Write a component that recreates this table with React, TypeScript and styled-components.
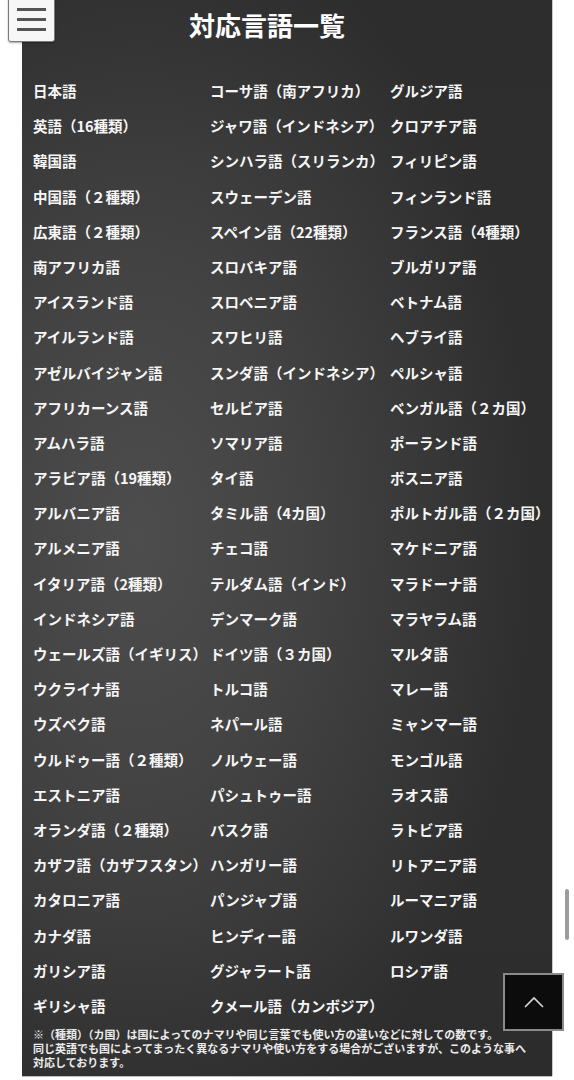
import React from "react";
import styled, { createGlobalStyle } from "styled-components";

const GlobalStyle = createGlobalStyle`
  html, body { margin: 0; padding: 0; background: #ffffff; }
  body {
    font-family: "Noto Sans CJK JP", "Noto Sans", sans-serif;
    overflow: hidden;
  }
`;

const Page = styled.div`
  position: relative;
  width: 574px;
  height: 1080px;
  overflow: hidden;
  background: #ffffff;
`;

const Panel = styled.section`
  box-sizing: border-box;
  width: 530px;
  height: 1076px;
  margin: 0 0 0 22px;
  padding: 0 0 0 11px;
  color: #f4f4f4;
  background:
    linear-gradient(180deg, rgba(40, 40, 40, 0.18) 0%, rgba(40, 40, 40, 0) 15%, rgba(40, 40, 40, 0) 85%, rgba(30, 30, 30, 0.12) 100%),
    radial-gradient(ellipse 75% 60% at 22% 50%, #4e4d4d 0%, #444343 40%, #373737 75%, #2e2e2e 100%);
  box-shadow: 1px 0 0 #c9c9c9, 0 1px 0 #bdbdbd;
`;

const Title = styled.h1`
  margin: 0;
  padding-right: 51px;
  font-size: 26px;
  font-weight: 700;
  line-height: 50px;
  text-align: center;
  color: #ffffff;
`;

const LangGrid = styled.ul`
  list-style: none;
  margin: 23px 0 0;
  padding: 0;
  display: grid;
  grid-template-columns: 177px 180px 1fr;
  grid-template-rows: repeat(27, 35.2px);
  grid-auto-flow: column;
`;

const LangItem = styled.li`
  font-size: 14.5px;
  font-weight: 700;
  line-height: 35.2px;
  white-space: nowrap;
  color: #f6f6f6;
`;

const Note = styled.p`
  margin: 4px 0 0;
  font-size: 11px;
  font-weight: 700;
  line-height: 14px;
  color: #ececec;
  white-space: nowrap;
`;

const NoteLine = styled.span`
  display: block;
`;

const MenuButton = styled.button`
  position: absolute;
  left: 8px;
  top: -2px;
  width: 47px;
  height: 44px;
  box-sizing: border-box;
  padding: 0;
  border: 1px solid #7a7a7a;
  border-radius: 0 0 3px 3px;
  background: #f7f7f7;
  box-shadow: 0 1px 2px rgba(0, 0, 0, 0.35);
  display: flex;
  flex-direction: column;
  align-items: center;
  justify-content: flex-start;
  gap: 7.5px;
  padding-top: 9px;
`;

const MenuBar = styled.span`
  display: block;
  width: 29px;
  height: 2.5px;
  background: #555555;
`;

const TopButton = styled.button`
  position: absolute;
  left: 503px;
  top: 973px;
  width: 61px;
  height: 58px;
  box-sizing: border-box;
  padding: 0;
  border: 2px solid #8a8a8a;
  background: #0c0c0c;
  display: flex;
  align-items: center;
  justify-content: center;
`;

const ScrollThumb = styled.div`
  position: absolute;
  left: 565px;
  top: 889px;
  width: 4px;
  height: 51px;
  border-radius: 2px;
  background: #9c9c9c;
`;

const col1 = [
  "日本語",
  "英語（16種類）",
  "韓国語",
  "中国語（２種類）",
  "広東語（２種類）",
  "南アフリカ語",
  "アイスランド語",
  "アイルランド語",
  "アゼルバイジャン語",
  "アフリカーンス語",
  "アムハラ語",
  "アラビア語（19種類）",
  "アルバニア語",
  "アルメニア語",
  "イタリア語（2種類）",
  "インドネシア語",
  "ウェールズ語（イギリス）",
  "ウクライナ語",
  "ウズベク語",
  "ウルドゥー語（２種類）",
  "エストニア語",
  "オランダ語（２種類）",
  "カザフ語（カザフスタン）",
  "カタロニア語",
  "カナダ語",
  "ガリシア語",
  "ギリシャ語",
];

const col2 = [
  "コーサ語（南アフリカ）",
  "ジャワ語（インドネシア）",
  "シンハラ語（スリランカ）",
  "スウェーデン語",
  "スペイン語（22種類）",
  "スロバキア語",
  "スロベニア語",
  "スワヒリ語",
  "スンダ語（インドネシア）",
  "セルビア語",
  "ソマリア語",
  "タイ語",
  "タミル語（4カ国）",
  "チェコ語",
  "テルダム語（インド）",
  "デンマーク語",
  "ドイツ語（３カ国）",
  "トルコ語",
  "ネパール語",
  "ノルウェー語",
  "パシュトゥー語",
  "バスク語",
  "ハンガリー語",
  "パンジャブ語",
  "ヒンディー語",
  "グジャラート語",
  "クメール語（カンボジア）",
];

const col3 = [
  "グルジア語",
  "クロアチア語",
  "フィリピン語",
  "フィンランド語",
  "フランス語（4種類）",
  "ブルガリア語",
  "ベトナム語",
  "ヘブライ語",
  "ペルシャ語",
  "ベンガル語（２カ国）",
  "ポーランド語",
  "ボスニア語",
  "ポルトガル語（２カ国）",
  "マケドニア語",
  "マラドーナ語",
  "マラヤラム語",
  "マルタ語",
  "マレー語",
  "ミャンマー語",
  "モンゴル語",
  "ラオス語",
  "ラトビア語",
  "リトアニア語",
  "ルーマニア語",
  "ルワンダ語",
  "ロシア語",
];

const pad = (arr: string[]) => {
  const out = [...arr];
  while (out.length < 27) out.push("");
  return out;
};

export default function App() {
  const items = [...pad(col1), ...pad(col2), ...pad(col3)];
  return (
    <>
      <GlobalStyle />
      <Page>
        <Panel>
          <Title>対応言語一覧</Title>
          <LangGrid>
            {items.map((name, i) => (
              <LangItem key={i}>{name}</LangItem>
            ))}
          </LangGrid>
          <Note>
            <NoteLine>※（種類）（カ国）は国によってのナマリや同じ言葉でも使い方の違いなどに対しての数です。</NoteLine>
            <NoteLine>同じ英語でも国によってまったく異なるナマリや使い方をする場合がございますが、このような事へ</NoteLine>
            <NoteLine>対応しております。</NoteLine>
          </Note>
        </Panel>
        <MenuButton aria-label="menu">
          <MenuBar />
          <MenuBar />
          <MenuBar />
        </MenuButton>
        <TopButton aria-label="top">
          <svg width="20" height="12" viewBox="0 0 20 12" fill="none">
            <polyline points="1,11 10,2 19,11" stroke="#d8d8d8" strokeWidth="1.6" />
          </svg>
        </TopButton>
        <ScrollThumb />
      </Page>
    </>
  );
}
